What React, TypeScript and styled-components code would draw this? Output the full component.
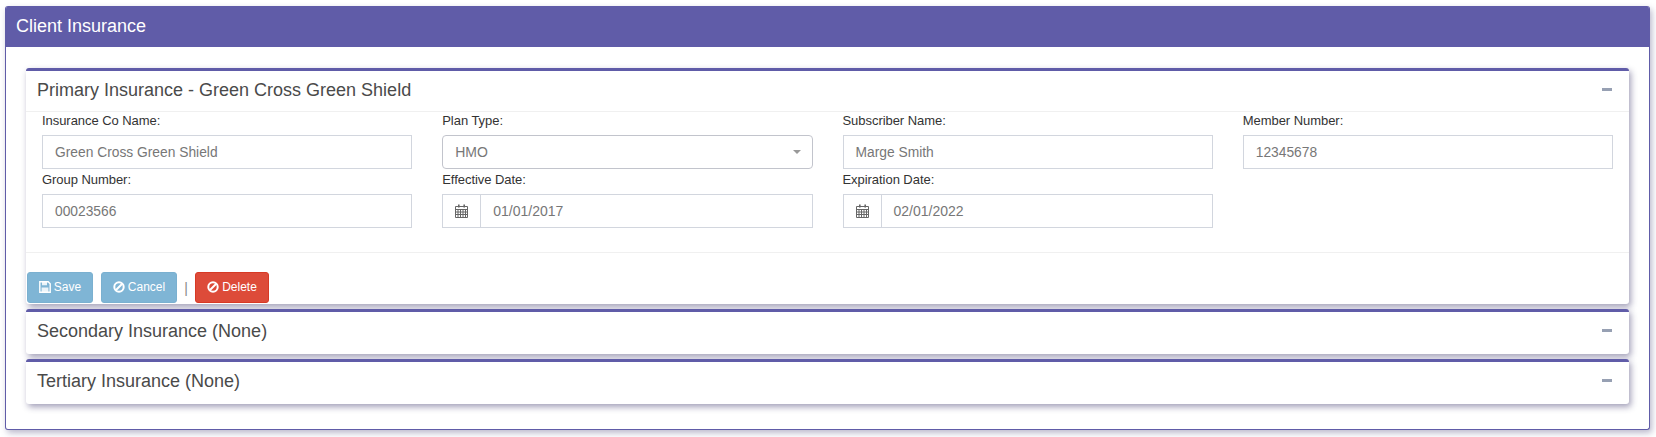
import React from "react";
import styled, { createGlobalStyle } from "styled-components";

const Global = createGlobalStyle`
  html, body { margin: 0; padding: 0; background: #fff; }
  body { font-family: "Liberation Sans", Arial, sans-serif; }
`;

const Page = styled.div`
  padding: 6px 6px 7px 5px;
`;

const Outer = styled.section`
  height: 424px;
  box-sizing: border-box;
  background: #fff;
  border: 1px solid #605ca8;
  border-top: 0;
  border-radius: 3px;
  box-shadow: 2px 3px 6px rgba(60, 55, 110, 0.35);
  overflow: hidden;
`;

const OuterHeader = styled.header`
  height: 41px;
  background: #605ca8;
  color: #fff;
  font-size: 18px;
  line-height: 40px;
  padding-left: 10px;
`;

const OuterBody = styled.div`
  padding: 21px 20px 0 20px;
  display: flex;
  flex-direction: column;
  gap: 5px;
`;

const Card = styled.article`
  background: #fff;
  border-top: 3px solid #605ca8;
  border-radius: 3px;
  box-shadow: 2px 3px 6px rgba(50, 45, 100, 0.45);
`;

const CardHeader = styled.div<{ $open?: boolean }>`
  height: ${(p) => (p.$open ? 41 : 42)}px;
  display: flex;
  align-items: center;
  justify-content: space-between;
  padding: 0 17px ${(p) => (p.$open ? 2 : 3)}px 11px;
  box-sizing: border-box;
  ${(p) => (p.$open ? "border-bottom: 1px solid #f0f0f0;" : "")}
`;

const CardTitle = styled.h3`
  margin: 0;
  font-weight: 400;
  font-size: 18px;
  color: #4a4a4a;
`;

const Collapse = styled.span`
  width: 10px;
  height: 3px;
  margin-top: -2px;
  background: #97a0b3;
`;

const FormGrid = styled.div`
  display: grid;
  grid-template-columns: repeat(4, 1fr);
  column-gap: 30px;
  padding: 0 16px;
  height: 140px;
  align-content: start;
  border-bottom: 1px solid #f0f0f0;
`;

const Field = styled.div`
  display: flex;
  flex-direction: column;
  height: 59px;
`;

const Label = styled.label`
  height: 23px;
  font-size: 13px;
  line-height: 18px;
  letter-spacing: -0.05px;
  color: #333;
`;

const TextBox = styled.div`
  height: 34px;
  box-sizing: border-box;
  border: 1px solid #d2d6de;
  padding: 0 12px;
  font-size: 13.8px;
  line-height: 33px;
  color: #777;
`;

const SelectBox = styled.div`
  height: 34px;
  margin-right: -0.5px;
  box-sizing: border-box;
  border: 1px solid #c2c4cc;
  border-radius: 4px;
  padding: 0 12px;
  font-size: 14px;
  line-height: 30px;
  color: #777;
  display: flex;
  justify-content: space-between;
  align-items: center;
`;

const Caret = styled.i`
  width: 0;
  height: 0;
  border-left: 4px solid transparent;
  border-right: 4px solid transparent;
  border-top: 4px solid #999;
  margin-right: -1px;
`;

const DateBox = styled.div`
  height: 34px;
  box-sizing: border-box;
  border: 1px solid #d2d6de;
  display: flex;
  font-size: 14px;
  line-height: 32px;
  color: #777;
`;

const DateAddon = styled.span`
  width: 38px;
  flex: none;
  box-sizing: border-box;
  border-right: 1px solid #d2d6de;
  display: flex;
  align-items: center;
  justify-content: center;
`;

const DateValue = styled.span`
  padding-left: 12px;
`;

const Actions = styled.div`
  display: flex;
  align-items: center;
  padding: 19px 0 1px 1px;
`;

const Btn = styled.button<{ $bg: string; $border: string; $w: number; $ml?: number }>`
  width: ${(p) => p.$w}px;
  height: 31px;
  margin-left: ${(p) => p.$ml ?? 0}px;
  padding: 0 0 2px;
  background: ${(p) => p.$bg};
  border: 1px solid ${(p) => p.$border};
  border-radius: 3px;
  color: #fff;
  font-family: inherit;
  font-size: 12px;
  display: flex;
  align-items: center;
  justify-content: center;
  gap: 3px;
`;

const Sep = styled.span`
  width: 18px;
  text-align: center;
  font-size: 14px;
  color: #888;
`;

const Calendar = () => (
  <svg width="13" height="14" viewBox="0 0 13 14" aria-hidden="true">
    <path
      d="M.5 2.5h12v11H.5zM.5 5.5h12M.5 8h12M.5 10.5h12M3 5.5v8M5.5 5.5v8M8 5.5v8M10.5 5.5v8"
      fill="none"
      stroke="#666"
      strokeWidth="1"
    />
    <path d="M3 .5h1.6v3H3zM8.4 .5H10v3H8.4z" fill="#666" />
  </svg>
);

const Ban = () => (
  <svg width="12" height="12" viewBox="0 0 12 12" aria-hidden="true">
    <circle cx="6" cy="6" r="4.7" fill="none" stroke="#fff" strokeWidth="2" />
    <path d="M3 9 9 3" stroke="#fff" strokeWidth="2" />
  </svg>
);

const Floppy = () => (
  <svg width="12" height="12" viewBox="0 0 12 12" aria-hidden="true">
    <path d="M.8.8h8.4l2 2v8.4H.8z" fill="none" stroke="#fff" strokeWidth="1.4" />
    <path d="M3 1h5v3.2H3zM2.6 6.6h6.8v4.4H2.6z" fill="#fff" opacity="0.85" />
  </svg>
);

const App = () => (
  <Page>
    <Global />
    <Outer>
      <OuterHeader>Client Insurance</OuterHeader>
      <OuterBody>
        <Card>
          <CardHeader $open>
            <CardTitle>Primary Insurance - Green Cross Green Shield</CardTitle>
            <Collapse />
          </CardHeader>
          <FormGrid>
            <Field>
              <Label>Insurance Co Name:</Label>
              <TextBox>Green Cross Green Shield</TextBox>
            </Field>
            <Field>
              <Label>Plan Type:</Label>
              <SelectBox>
                HMO
                <Caret />
              </SelectBox>
            </Field>
            <Field>
              <Label>Subscriber Name:</Label>
              <TextBox>Marge Smith</TextBox>
            </Field>
            <Field>
              <Label>Member Number:</Label>
              <TextBox>12345678</TextBox>
            </Field>
            <Field>
              <Label>Group Number:</Label>
              <TextBox>00023566</TextBox>
            </Field>
            <Field>
              <Label>Effective Date:</Label>
              <DateBox>
                <DateAddon>
                  <Calendar />
                </DateAddon>
                <DateValue>01/01/2017</DateValue>
              </DateBox>
            </Field>
            <Field>
              <Label>Expiration Date:</Label>
              <DateBox>
                <DateAddon>
                  <Calendar />
                </DateAddon>
                <DateValue>02/01/2022</DateValue>
              </DateBox>
            </Field>
          </FormGrid>
          <Actions>
            <Btn $bg="#7fb5d5" $border="#7ab0d0" $w={66}>
              <Floppy /> Save
            </Btn>
            <Btn $bg="#7fb5d5" $border="#7ab0d0" $w={76} $ml={8}>
              <Ban /> Cancel
            </Btn>
            <Sep>|</Sep>
            <Btn $bg="#dd4b39" $border="#d73925" $w={74}>
              <Ban /> Delete
            </Btn>
          </Actions>
        </Card>
        <Card>
          <CardHeader>
            <CardTitle>Secondary Insurance (None)</CardTitle>
            <Collapse />
          </CardHeader>
        </Card>
        <Card>
          <CardHeader>
            <CardTitle>Tertiary Insurance (None)</CardTitle>
            <Collapse />
          </CardHeader>
        </Card>
      </OuterBody>
    </Outer>
  </Page>
);

export default App;
